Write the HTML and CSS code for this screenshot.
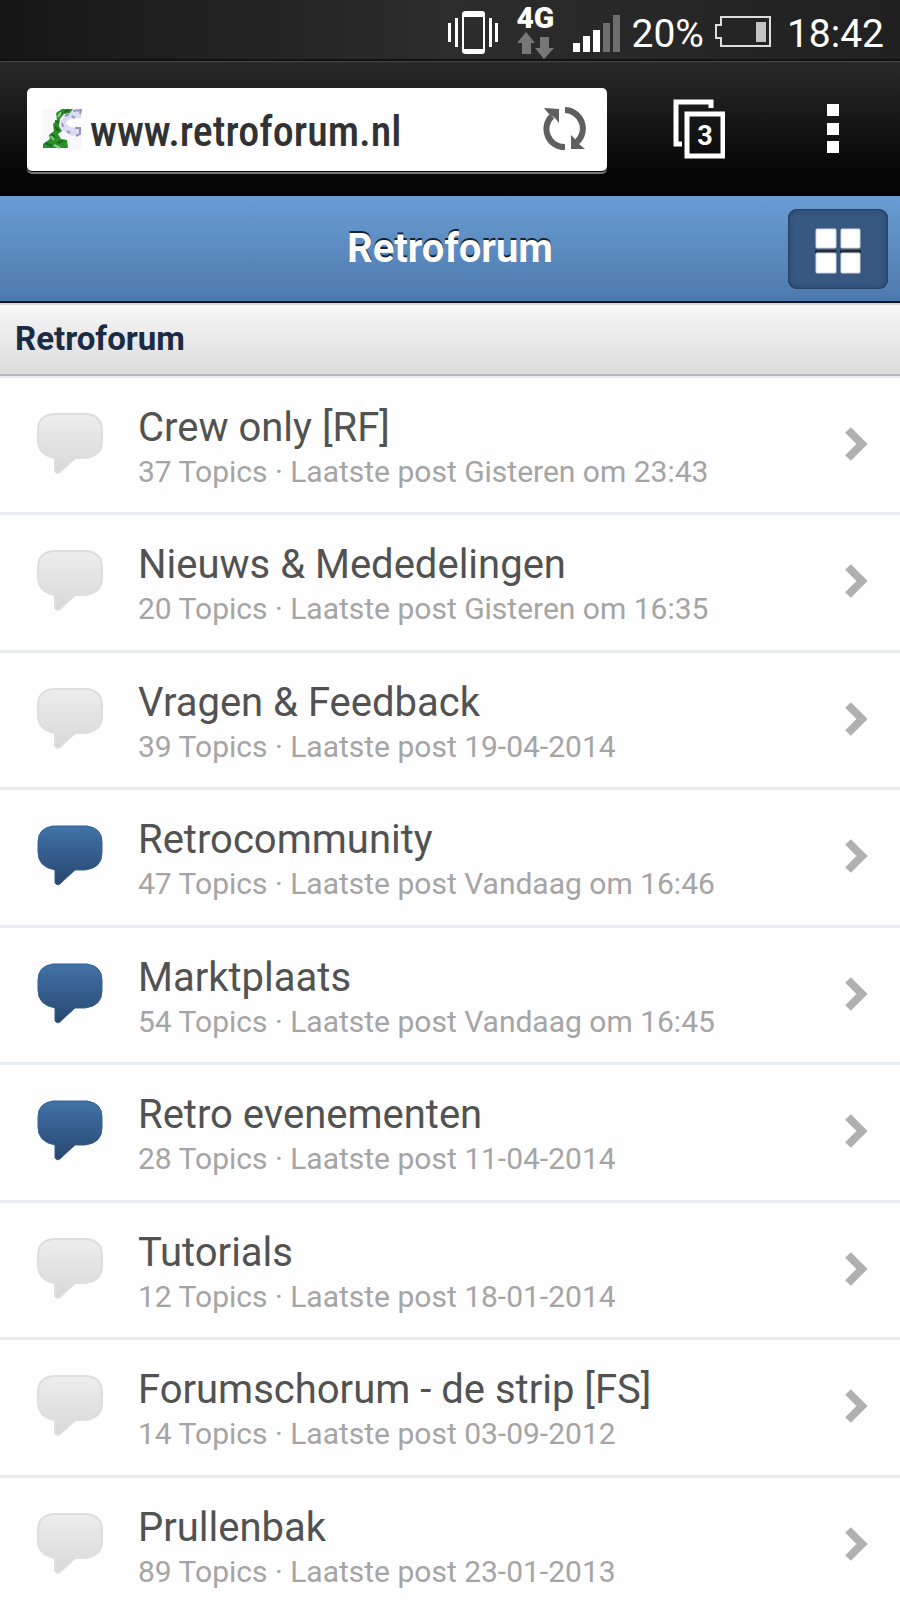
FILE: index.html
```html
<!DOCTYPE html>
<html lang="nl">
<head>
<meta charset="utf-8">
<meta name="viewport" content="width=device-width, initial-scale=1">
<title>Retroforum</title>
<link rel="stylesheet" href="styles.css">
</head>
<body>
<svg class="sprite" width="0" height="0" aria-hidden="true">
  <defs>
    <linearGradient id="read-fill" x1="0" y1="0" x2="0" y2="1"><stop offset="0" stop-color="#ededed"/><stop offset="1" stop-color="#d8d8d8"/></linearGradient>
    <linearGradient id="unread-fill" x1="0" y1="0" x2="0" y2="1"><stop offset="0" stop-color="#4273a8"/><stop offset="1" stop-color="#27466f"/></linearGradient>
    <path id="bubble" d="M16 1H50Q65 3 65 17V28Q65 43 48 45H38L25 57Q21 62 18 58V45Q1 42 1 27V17Q1 3 16 1Z"/>
    <symbol id="read" viewBox="0 0 66 62"><use href="#bubble" fill="url(#read-fill)" stroke="#dedede" stroke-width="2"/></symbol>
    <symbol id="unread" viewBox="0 0 66 62"><use href="#bubble" fill="url(#unread-fill)" stroke="#365f91" stroke-width="1"/></symbol>
    <symbol id="chevron" viewBox="0 0 24 36"><path d="M4 4L18 18L4 32" fill="none" stroke="#b0b0b0" stroke-width="8"/></symbol>
  </defs>
</svg>

<div class="statusbar">
  <svg class="vibrate" width="52" height="46" viewBox="0 0 52 46" aria-hidden="true">
    <path fill="#fff" fill-rule="evenodd" d="M18 2H34Q37 2 37 5V42Q37 45 34 45H18Q14 45 14 42V5Q14 2 18 2ZM16 8V40H35V8Z"/>
    <path fill="#fff" d="M0 14h3v19H0zM7 9h3v29H7zM41 9h3v29h-3zM47 14h3v19h-3z"/>
  </svg>
  <div class="network">
    <span class="network-type">4G</span>
    <svg width="37" height="27" viewBox="0 0 37 27" aria-hidden="true"><path fill="#777" d="M9 0L18 11H14V22H5V11H0ZM23 5H32V16H37L27 27L18 16H23Z"/></svg>
  </div>
  <svg class="signal" width="48" height="38" viewBox="0 0 48 38" aria-hidden="true">
    <path fill="#fff" d="M0 28h7v9H0zM10 21h7v16h-7zM20 15h7v22h-7z"/>
    <path fill="#6e6e6e" d="M30 8h7v29h-7zM40 0h7v37h-7z"/>
  </svg>
  <span class="percent">20%</span>
  <svg class="battery" width="57" height="32" viewBox="0 0 57 32" aria-hidden="true">
    <path fill="none" stroke="#ddd" stroke-width="2" d="M6 1H55V30H6V22H1V9H6Z"/>
    <path fill="#c4c4c4" d="M41 6h10v20H41z"/>
  </svg>
  <time class="clock">18:42</time>
</div>

<div class="browserbar">
  <div class="address">
    <svg width="40" height="40" viewBox="0 0 40 40" aria-hidden="true">
      <path fill="#f8f8fa" d="M0 0h40v40H0z"/>
      <path fill="#dcdcf0" d="M24 4L39 1V9L28 10L24 15L32 19L38 20L37 26L30 27L20 21L19 12Z"/>
      <path fill="#299127" d="M14 4L20 0H31L28 4L22 5L18 10L17 17L20 22L16 25L19 30L25 31L26 39H1V35L8 30L7 26L12 22L11 15L15 11Z"/>
      <path fill="none" stroke="#1c6523" stroke-width="2" d="M17 3L21 4M13 12L17 13M13 18L17 22M9 25L13 28M3 34L10 37M15 34L21 32M22 3L27 1"/>
      <path fill="none" stroke="#8fcf92" stroke-width="2" d="M9 27L12 31M12 36L18 39M19 3L16 8"/>
      <path fill="none" stroke="#9295bf" stroke-width="2" d="M31 2L39 1L38 5M23 7L27 5M20 14L21 18M33 19H38V25L34 27M25 22L28 24M30 7L33 9"/>
      <path fill="#fff" d="M26 11L36 9L40 10V18L34 17L28 18L24 14Z"/>
    </svg>
    <input class="url" type="text" value="www.retroforum.nl" aria-label="Adres" spellcheck="false">
    <button class="icon-button" type="button" aria-label="Vernieuwen">
      <svg width="44" height="44" viewBox="0 0 44 44" aria-hidden="true">
        <path fill="none" stroke="#5f5f5f" stroke-width="6" d="M22 40A18 18 0 0 1 9 9M22 3A18.500 18.500 0 0 1 34 35"/>
        <path fill="#5f5f5f" d="M1 1L16 2V16L12 11L5 6ZM28 28L32 32L36 37L42 42H28Z"/>
      </svg>
    </button>
  </div>
  <button class="tool" type="button" aria-label="Tabbladen: 3">
    <span class="tabs">
      <svg width="52" height="60" viewBox="0 0 52 60" aria-hidden="true"><path fill="none" stroke="#fff" stroke-width="5" d="M38 9V3H3V45H9M14 15H50V57H14Z"/></svg>
      <span class="tab-count">3</span>
    </span>
  </button>
  <button class="tool" type="button" aria-label="Menu">
    <svg width="12" height="50" viewBox="0 0 12 50" aria-hidden="true"><path fill="#fff" d="M0 0h12v12H0zM0 19h12v12H0zM0 37h12v12H0z"/></svg>
  </button>
</div>

<header class="titlebar">
  <h1 class="site-title">Retroforum</h1>
  <button class="menu-button" type="button" aria-label="Navigatie">
    <svg width="46" height="46" viewBox="0 0 46 46" aria-hidden="true"><path fill="#222d3b" d="M0 22h21v3H0zM25 22h21v3H25z"/><g fill="#fff" stroke="#cfd5dd"><rect x="1" y="1" width="20" height="19" rx="1"/><rect x="26" y="1" width="19" height="19" rx="1"/><rect x="1" y="25" width="20" height="20" rx="1"/><rect x="26" y="25" width="19" height="20" rx="1"/></g></svg>
  </button>
</header>

<main>
  <h2 class="section">Retroforum</h2>
  <ul class="forums">
    <li><a class="forum" href="#crew"><svg class="status" role="img" aria-label="Gelezen"><use href="#read"/></svg><span class="text"><span class="name">Crew only [RF]</span><span class="meta">37 Topics · Laatste post Gisteren om 23:43</span></span><svg class="chevron" aria-hidden="true"><use href="#chevron"/></svg></a></li>
    <li><a class="forum" href="#nieuws"><svg class="status" role="img" aria-label="Gelezen"><use href="#read"/></svg><span class="text"><span class="name">Nieuws &amp; Mededelingen</span><span class="meta">20 Topics · Laatste post Gisteren om 16:35</span></span><svg class="chevron" aria-hidden="true"><use href="#chevron"/></svg></a></li>
    <li><a class="forum" href="#vragen"><svg class="status" role="img" aria-label="Gelezen"><use href="#read"/></svg><span class="text"><span class="name">Vragen &amp; Feedback</span><span class="meta">39 Topics · Laatste post 19-04-2014</span></span><svg class="chevron" aria-hidden="true"><use href="#chevron"/></svg></a></li>
    <li><a class="forum" href="#community"><svg class="status" role="img" aria-label="Ongelezen"><use href="#unread"/></svg><span class="text"><span class="name">Retrocommunity</span><span class="meta">47 Topics · Laatste post Vandaag om 16:46</span></span><svg class="chevron" aria-hidden="true"><use href="#chevron"/></svg></a></li>
    <li><a class="forum" href="#marktplaats"><svg class="status" role="img" aria-label="Ongelezen"><use href="#unread"/></svg><span class="text"><span class="name">Marktplaats</span><span class="meta">54 Topics · Laatste post Vandaag om 16:45</span></span><svg class="chevron" aria-hidden="true"><use href="#chevron"/></svg></a></li>
    <li><a class="forum" href="#evenementen"><svg class="status" role="img" aria-label="Ongelezen"><use href="#unread"/></svg><span class="text"><span class="name">Retro evenementen</span><span class="meta">28 Topics · Laatste post 11-04-2014</span></span><svg class="chevron" aria-hidden="true"><use href="#chevron"/></svg></a></li>
    <li><a class="forum" href="#tutorials"><svg class="status" role="img" aria-label="Gelezen"><use href="#read"/></svg><span class="text"><span class="name">Tutorials</span><span class="meta">12 Topics · Laatste post 18-01-2014</span></span><svg class="chevron" aria-hidden="true"><use href="#chevron"/></svg></a></li>
    <li><a class="forum" href="#strip"><svg class="status" role="img" aria-label="Gelezen"><use href="#read"/></svg><span class="text"><span class="name">Forumschorum - de strip [FS]</span><span class="meta">14 Topics · Laatste post 03-09-2012</span></span><svg class="chevron" aria-hidden="true"><use href="#chevron"/></svg></a></li>
    <li><a class="forum" href="#prullenbak"><svg class="status" role="img" aria-label="Gelezen"><use href="#read"/></svg><span class="text"><span class="name">Prullenbak</span><span class="meta">89 Topics · Laatste post 23-01-2013</span></span><svg class="chevron" aria-hidden="true"><use href="#chevron"/></svg></a></li>
  </ul>
</main>
</body>
</html>
```
FILE: styles.css
```css
* { box-sizing: border-box; }

body {
  margin: 0;
  background: #fefefe;
  font-family: Roboto, "Liberation Sans", sans-serif;
}

svg { display: block; flex: none; }
.sprite { position: absolute; }

button {
  padding: 0;
  border: 0;
  background: none;
  display: grid;
  place-items: center;
  font: inherit;
  color: inherit;
}

/* Device status bar */
.statusbar {
  display: flex;
  justify-content: flex-end;
  align-items: center;
  height: 62px;
  padding: 3px 16px 0 0;
  border-bottom: 1px solid #454545;
  box-shadow: inset 0 -2px #111;
  background: linear-gradient(90deg, #161616, #2d2d2d 50%, #202020);
  color: #fff;
  font-size: 39px;
  line-height: 40px;
}
.vibrate { margin-right: 16px; }
.network { display: grid; gap: 2px; justify-items: center; width: 37px; margin-right: 20px; }
.network-type { font-size: 30px; font-weight: 900; line-height: 24px; }
.signal { margin: 4px 10px 0 0; }
.percent { margin: 4px 11px 0 0; }
.battery { margin-right: 15px; }
.clock { margin-top: 4px; }

/* Browser toolbar */
.browserbar {
  display: flex;
  align-items: center;
  height: 134px;
  padding-left: 27px;
  background: linear-gradient(#292929, #050505 85%);
  color: #fff;
}
.address {
  display: flex;
  align-items: center;
  flex: 1;
  min-width: 0;
  height: 83px;
  margin-right: 25px;
  padding: 0 20px 0 15px;
  border-radius: 5px;
  background: #fff;
  box-shadow: 0 1px #050505, 0 3px #777;
}
.url {
  flex: 1;
  min-width: 0;
  padding: 4px 8px 0;
  border: 0;
  outline: 0;
  background: none;
  color: #303234;
  font-family: "Roboto Condensed", "Liberation Sans Narrow", Roboto, sans-serif;
  font-size: 42px;
  font-weight: 500;
}
.tool { width: 134px; height: 84px; }
.tabs { position: relative; }
.tab-count {
  position: absolute;
  right: 0;
  bottom: 0;
  width: 40px;
  font-size: 27px;
  font-weight: 700;
  line-height: 46px;
  text-align: center;
}

/* Forum header */
.titlebar {
  display: grid;
  grid-template-columns: 1fr auto 1fr;
  align-items: center;
  height: 107px;
  padding: 0 12px;
  border-bottom: 2px solid #111722;
  background: linear-gradient(#699dd3, #4d79ae);
}
.site-title {
  grid-column: 2;
  margin: 0;
  color: #fff;
  font-size: 40px;
  line-height: 48px;
  text-shadow: 0 -2px #16222f;
}
.menu-button {
  justify-self: end;
  width: 100px;
  height: 80px;
  padding-top: 4px;
  border-radius: 9px;
  background: #365881;
  box-shadow: inset 0 0 6px #243c5b, inset 0 0 0 1px #2c4a70;
}

.section {
  margin: 0;
  padding: 15px 15px 16px;
  border-top: 2px solid #d9d7d9;
  border-bottom: 2px solid #b9b9b9;
  background: linear-gradient(#f6f6f6, #dcdcdc);
  color: #1a2c44;
  font-size: 33px;
  line-height: 38px;
}

/* Forum list */
.forums { margin: 0; padding: 0; list-style: none; border-top: 2px solid #e9edf1; }
.forum {
  display: flex;
  align-items: flex-start;
  padding: 25px 32px 22px 36px;
  border-bottom: 3px solid #e9edf1;
  color: #525252;
  text-decoration: none;
}
li:nth-child(even) .forum { padding-bottom: 23px; }
li:last-child .forum { padding-bottom: 10px; border-bottom: 0; }
.status { width: 68px; height: 62px; margin-top: 10px; }
.text { flex: 1; min-width: 0; margin-left: 34px; }
.name, .meta { display: block; }
.name { font-size: 40px; line-height: 50px; }
.meta { color: #a5a5a5; font-size: 30px; line-height: 37px; }
.chevron { width: 24px; height: 36px; margin-top: 23px; }
```
